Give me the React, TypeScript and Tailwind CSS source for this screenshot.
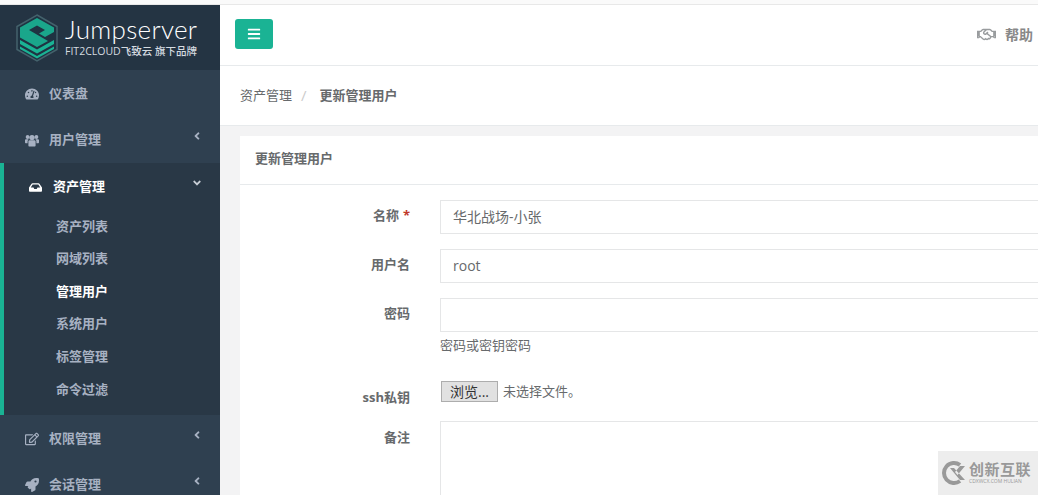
import {
  FaAngleDown,
  FaAngleLeft,
  FaBars,
  FaInbox,
  FaRegEdit,
  FaRegHandshake,
  FaRocket,
  FaTachometerAlt,
} from "react-icons/fa";
import type { ReactNode } from "react";

const cjk = "font-['Open_Sans','Noto_Sans_CJK_SC',sans-serif]";

function Logo() {
  return (
    <svg width="42" height="48" viewBox="0 0 42 48" className="shrink-0">
      <path d="M21 1 L41 12.5 V35.5 L21 47 L1 35.5 V12.5 Z" fill="#1f3342" stroke="#44626c" strokeWidth="1.5" />
      <path d="M21 4 L38 13.5 V18 L29 23 L23 19.5 L29 16 L21 11.5 L13 16 L32 27 L21 33 L4 23.5 V13.5 Z" fill="#1ab394" opacity="0.9" />
      <path d="M4 26 L21 35.5 L38 26 V30 L21 39.5 L4 30 Z" fill="#1ab394" />
      <path d="M4 32.5 L21 42 L38 32.5 V35 L21 44.5 L4 35 Z" fill="#1ab394" />
    </svg>
  );
}

function UsersIcon() {
  return (
    <svg width="14" height="13" viewBox="0 0 14 13" fill="currentColor">
      <circle cx="7" cy="3.6" r="2.7" />
      <circle cx="2.6" cy="3" r="1.9" />
      <circle cx="11.4" cy="3" r="1.9" />
      <path d="M3.4 7.4 C3.4 6.6 4.2 6.3 5 6.3 H9 C9.8 6.3 10.6 6.6 10.6 7.4 V11.4 C10.6 12.2 9.8 12.6 9 12.6 H5 C4.2 12.6 3.4 12.2 3.4 11.4 Z" />
      <path d="M0 6 C0 5.4 .6 5.2 1.2 5.2 H3.6 C3 5.9 2.6 6.6 2.6 7.6 V9.2 H1 C.4 9.2 0 8.8 0 8.2 Z" />
      <path d="M14 6 C14 5.4 13.4 5.2 12.8 5.2 H10.4 C11 5.9 11.4 6.6 11.4 7.6 V9.2 H13 C13.6 9.2 14 8.8 14 8.2 Z" />
    </svg>
  );
}

function NavItem({ icon, label, arrow = true }: { icon: ReactNode; label: string; arrow?: boolean }) {
  return (
    <div className="flex h-[46px] shrink-0 items-center pl-[25px] pr-[17px] text-[#a7b1c2]">
      <span className="flex w-[24px] text-[14px]">{icon}</span>
      <span className="text-[13px] font-semibold">{label}</span>
      {arrow && <FaAngleLeft className="mb-2 ml-auto text-[12px]" />}
    </div>
  );
}

function SubItem({ label, active }: { label: string; active?: boolean }) {
  return (
    <div className={`flex h-[32.6px] items-center pl-[52px] text-[13px] font-semibold ${active ? "text-white" : "text-[#a7b1c2]"}`}>
      {label}
    </div>
  );
}

function Sidebar() {
  return (
    <aside className="flex h-full w-[220px] shrink-0 flex-col overflow-hidden bg-[#2f4050]">
      <div className="flex h-[65px] shrink-0 items-center gap-[7px] bg-[#243443] pl-[16px]">
        <Logo />
        <div className="flex flex-col">
          <span className="font-['Lato',sans-serif] text-[26px] leading-[28px] font-light tracking-[0.3px] text-white">Jumpserver</span>
          <span className="text-[10.5px] leading-[17px] font-medium text-[#d5dbe0]">FIT2CLOUD飞致云 旗下品牌</span>
        </div>
      </div>
      <div className="h-[1px] shrink-0" />
      <NavItem icon={<FaTachometerAlt />} label="仪表盘" arrow={false} />
      <NavItem icon={<UsersIcon />} label="用户管理" />
      <div className="h-[252px] shrink-0 border-l-4 border-[#1ab394] bg-[#293846] pt-[1px]">
        <div className="flex h-[46px] items-center pl-[25px] pr-[17px] text-white">
          <span className="flex w-[24px] text-[13px]"><FaInbox /></span>
          <span className="text-[13px] font-semibold">资产管理</span>
          <FaAngleDown className="mb-2 ml-auto text-[12px] text-[#c8ced6]" />
        </div>
        <SubItem label="资产列表" />
        <SubItem label="网域列表" />
        <SubItem label="管理用户" active />
        <SubItem label="系统用户" />
        <SubItem label="标签管理" />
        <SubItem label="命令过滤" />
      </div>
      <div className="h-[1px] shrink-0" />
      <NavItem icon={<FaRegEdit />} label="权限管理" />
      <NavItem icon={<FaRocket />} label="会话管理" />
    </aside>
  );
}

function Field({ label, required, low, children }: { label: string; required?: boolean; low?: boolean; children: ReactNode }) {
  return (
    <div className="flex">
      <label className={`w-[170px] shrink-0 text-right text-[13px] font-bold text-[#676a6c] ${low ? "pt-[7px]" : "pt-[6px]"}`}>
        {label}
        {required && <span className="ml-1 text-[#c0392b]">*</span>}
      </label>
      <div className="ml-[30px] min-w-0 flex-1">{children}</div>
    </div>
  );
}

function TextBox({ value }: { value?: string }) {
  return (
    <div className="flex h-[34px] w-[700px] items-center border border-[#e5e6e7] bg-white px-3 pb-[2px] text-[14px] text-[#676a6c]">
      {value}
    </div>
  );
}

function Main() {
  return (
    <main className="flex h-full min-w-0 flex-1 flex-col overflow-hidden bg-[#f3f3f4]">
      <header className="flex h-[61px] shrink-0 items-center border-b border-[#e7eaec] bg-white pb-[2px] pl-[15px] pr-[5px]">
        <button className="flex h-[30px] w-[38px] items-center justify-center rounded-[3px] bg-[#1ab394] text-[14px] text-white">
          <FaBars />
        </button>
        <div className="ml-auto flex items-center gap-[9px] text-[14px] font-semibold text-[#888]">
          <FaRegHandshake className="text-[19px] text-[#999c9e]" />
          <span>帮助</span>
        </div>
      </header>
      <div className="flex h-[60px] shrink-0 items-center border-b border-[#e7eaec] bg-white pl-[20px] text-[13px] text-[#676a6c]">
        <span>资产管理</span>
        <span className="ml-[9px] mr-[13px] text-[15px] text-[#ccc]">/</span>
        <strong className="font-bold">更新管理用户</strong>
      </div>
      <section className="mt-[10px] ml-[20px] flex-1 bg-white">
        <div className="flex h-[49px] items-center border-b border-[#e7eaec] pb-[2px] pl-[15px] text-[13px] font-bold text-[#676a6c]">
          更新管理用户
        </div>
        <div className="flex flex-col pt-[15px]">
          <div className="flex flex-col gap-[15px]">
            <Field label="名称" required><TextBox value="华北战场-小张" /></Field>
            <Field label="用户名"><TextBox value="root" /></Field>
            <Field label="密码">
              <TextBox />
              <p className="mt-[4px] text-[13px] leading-[19px] text-[#676a6c]">密码或密钥密码</p>
            </Field>
          </div>
          <div className="mt-[26px]">
            <Field label="ssh私钥" low>
              <div className="flex items-center pl-[1px] text-[13px] text-[#676a6c]">
                <span className="flex h-[21px] w-[57px] items-center justify-center border border-[#adadad] bg-[#e1e1e1] text-[14px] text-[#333]">浏览...</span>
                <span className="ml-[5px]">未选择文件。</span>
              </div>
            </Field>
          </div>
          <div className="mt-[13px]">
            <Field label="备注" low>
              <div className="h-[120px] w-[700px] border border-[#e5e6e7]" />
            </Field>
          </div>
        </div>
      </section>
    </main>
  );
}

function Watermark() {
  return (
    <div className="absolute right-0 bottom-0 flex h-[44px] w-[100px] items-center gap-[2px] bg-[#ebebeb]/90 pl-[3px]">
      <svg width="26" height="26" viewBox="0 0 26 26" className="shrink-0">
        <path d="M19 5 A10 10 0 1 0 19 21" fill="none" stroke="#999" strokeWidth="4" />
        <path d="M9 8 L13 8 L24 20 L19 20 Z M24 6 L19 6 L14 12 L16.5 15 Z" fill="#999" />
      </svg>
      <div className="flex flex-col text-[#999]">
        <span className="text-[15px] leading-[17px] font-semibold tracking-[0.5px]">创新互联</span>
        <span className="text-[5px] leading-[7px]">CDXWCX.COM HULIAN</span>
      </div>
    </div>
  );
}

export default function App() {
  return (
    <div className={`flex h-[495px] w-[1038px] flex-col overflow-hidden bg-[#f3f3f4] ${cjk} relative`}>
      <div className="h-[5px] shrink-0 border-b border-[#e8e8e8] bg-[#fafafa]" />
      <div className="flex h-[490px]">
        <Sidebar />
        <Main />
      </div>
      <Watermark />
    </div>
  );
}
